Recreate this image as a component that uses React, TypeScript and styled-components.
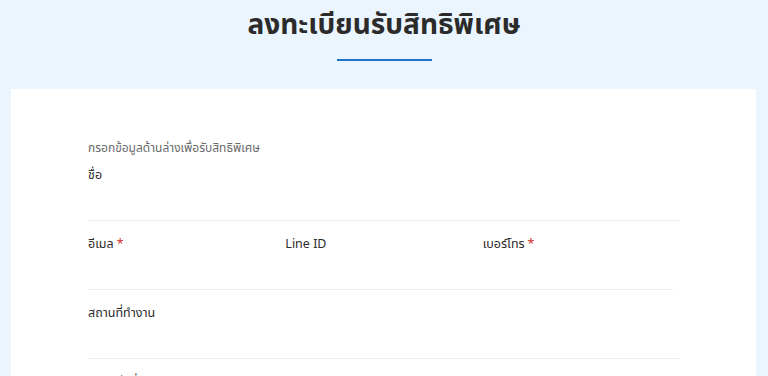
import React from 'react';
import styled, { createGlobalStyle } from 'styled-components';

const GlobalStyle = createGlobalStyle`
    html, body {
        margin: 0;
        padding: 0;
        background: #ebf5fe;
        font-family: 'Noto Sans Thai', 'Noto Sans', 'DejaVu Sans', sans-serif;
    }
`;

const Page = styled.div`
    width: 768px;
    height: 376px;
    overflow: hidden;
    background: #ebf5fe;
`;

const Header = styled.header`
    height: 89px;
    display: flex;
    flex-direction: column;
    align-items: center;
`;

const Title = styled.h1`
    margin: 7px 0 0;
    font-size: 28px;
    line-height: 38px;
    font-weight: 700;
    color: #2b2b2b;
`;

const Underline = styled.div`
    width: 95px;
    height: 2px;
    margin-top: 14px;
    background: #1d74c9;
`;

const Card = styled.div`
    margin: 0 12px 0 11px;
    background: #ffffff;
    padding: 50px 77px 0;
    min-height: 300px;
`;

const Form = styled.form`
    width: 592px;
`;

const Hint = styled.p`
    margin: 0 0 7px;
    font-size: 12px;
    line-height: 18px;
    color: #6b6b6b;
`;

const Row = styled.div`
    display: grid;
    grid-template-columns: repeat(3, 1fr);
`;

const Field = styled.div`
    margin-bottom: 12px;
`;

const Label = styled.label`
    display: block;
    padding-top: 2px;
    font-size: 12.5px;
    line-height: 20px;
    color: #2b2b2b;
`;

const Required = styled.span`
    color: #d32f2f;
    margin-left: 3px;
`;

const Input = styled.input`
    display: block;
    width: 100%;
    height: 35px;
    box-sizing: border-box;
    border: none;
    border-bottom: 1px solid #ececec;
    background: transparent;
    outline: none;
    padding: 0;
    font: inherit;
`;

const RowField = styled.div`
    display: flex;
    flex-direction: column;
`;

const RowLine = styled.div<{ $width: number }>`
    width: ${(p) => p.$width}px;
    height: 1px;
    background: #ececec;
    margin-bottom: 12px;
`;

const RowInput = styled.input`
    height: 34px;
    box-sizing: border-box;
    border: none;
    background: transparent;
    outline: none;
    padding: 0;
`;

const App: React.FC = () => {
    return (
        <Page>
            <GlobalStyle />
            <Header>
                <Title>ลงทะเบียนรับสิทธิพิเศษ</Title>
                <Underline />
            </Header>
            <Card>
                <Form>
                    <Hint>กรอกข้อมูลด้านล่างเพื่อรับสิทธิพิเศษ</Hint>
                    <Field>
                        <Label>ชื่อ</Label>
                        <Input type="text" />
                    </Field>
                    <Row>
                        <RowField>
                            <Label>อีเมล<Required>*</Required></Label>
                            <RowInput type="email" />
                        </RowField>
                        <RowField>
                            <Label>Line ID</Label>
                            <RowInput type="text" />
                        </RowField>
                        <RowField>
                            <Label>เบอร์โทร<Required>*</Required></Label>
                            <RowInput type="tel" />
                        </RowField>
                    </Row>
                    <RowLine $width={585} />
                    <Field>
                        <Label>สถานที่ทำงาน</Label>
                        <Input type="text" />
                    </Field>
                    <Field>
                        <Label>ตำแหน่งที่ทำงาน</Label>
                        <Input type="text" />
                    </Field>
                </Form>
            </Card>
        </Page>
    );
};

export default App;
